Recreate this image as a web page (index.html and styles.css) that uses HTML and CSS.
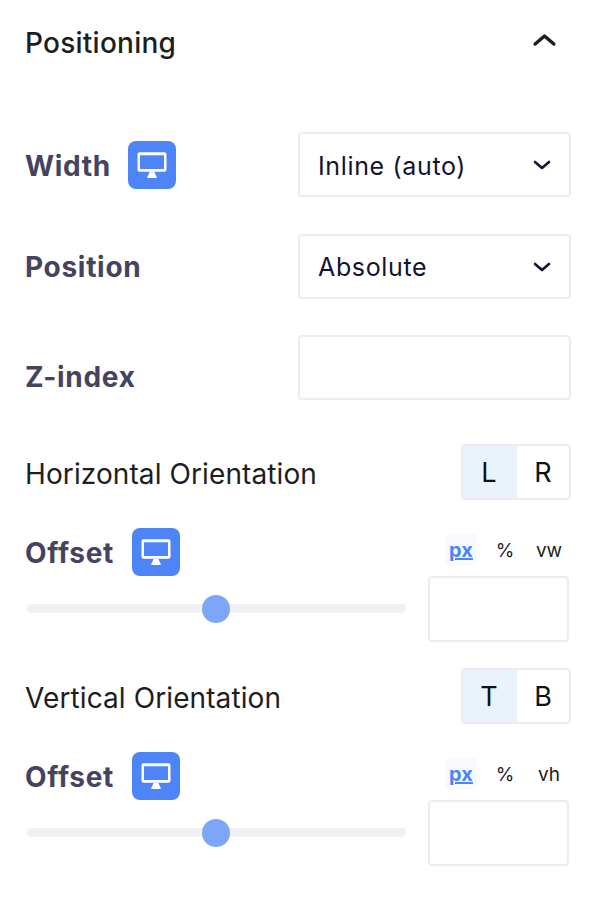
FILE: index.html
```html
<!DOCTYPE html>
<html lang="en">
<head>
<meta charset="utf-8">
<title>Positioning</title>
<link rel="stylesheet" href="styles.css">
</head>
<body>
<svg class="sprite" width="0" height="0" aria-hidden="true">
  <symbol id="monitor" viewBox="0 0 48 48">
    <path fill="#fff" fill-rule="evenodd" d="M11.500 11.300h25a2 2 0 0 1 2 2v15.500a2 2 0 0 1-2 2h-25a2 2 0 0 1-2-2V13.300a2 2 0 0 1 2-2zm.5 3v13.700h24V14.300z"/>
    <path fill="#fff" d="M21.500 31h5l2.500 6H19z"/>
  </symbol>
  <symbol id="chev" viewBox="0 0 20 12">
    <path fill="none" stroke="currentColor" stroke-width="2.600" stroke-linecap="round" stroke-linejoin="round" d="M3 3l7 6 7-6"/>
  </symbol>
</svg>
<main class="panel">
  <header class="head">
    <h1 class="title">Positioning</h1>
    <svg class="collapse"><use href="#chev"/></svg>
  </header>

  <div class="row row-width">
    <div class="label-group">
      <span class="label">Width</span>
      <span class="device"><svg><use href="#monitor"/></svg></span>
    </div>
    <div class="field select"><span class="value">Inline (auto)</span><svg class="caret"><use href="#chev"/></svg></div>
  </div>
  <div class="row row-position">
    <span class="label">Position</span>
    <div class="field select"><span>Absolute</span><svg class="caret"><use href="#chev"/></svg></div>
  </div>
  <div class="row row-z">
    <span class="label label-low">Z-index</span>
    <div class="field"></div>
  </div>

  <section class="orient">
    <div class="orient-head">
      <span class="orient-title">Horizontal Orientation</span>
      <div class="toggle"><span class="toggle-item on">L</span><span class="toggle-item">R</span></div>
    </div>
    <div class="offset">
      <div class="offset-left">
        <div class="label-group tight">
          <span class="label">Offset</span>
          <span class="device"><svg><use href="#monitor"/></svg></span>
        </div>
        <div class="slider"><span class="thumb"></span></div>
      </div>
      <div class="offset-right">
        <div class="units"><span class="unit active">px</span><span class="unit">%</span><span class="unit">vw</span></div>
        <div class="field small"></div>
      </div>
    </div>
  </section>

  <section class="orient">
    <div class="orient-head">
      <span class="orient-title">Vertical Orientation</span>
      <div class="toggle"><span class="toggle-item on">T</span><span class="toggle-item">B</span></div>
    </div>
    <div class="offset">
      <div class="offset-left">
        <div class="label-group tight">
          <span class="label">Offset</span>
          <span class="device"><svg><use href="#monitor"/></svg></span>
        </div>
        <div class="slider"><span class="thumb"></span></div>
      </div>
      <div class="offset-right">
        <div class="units"><span class="unit active">px</span><span class="unit">%</span><span class="unit">vh</span></div>
        <div class="field small"></div>
      </div>
    </div>
  </section>
</main>
</body>
</html>
```

FILE: styles.css
```css
* { box-sizing: border-box; }
html, body { margin: 0; padding: 0; background: #fff; }
body { font-family: Inter, "Liberation Sans", sans-serif; color: #1e1e1e; }
.sprite { position: absolute; }
.panel { width: 604px; height: 912px; padding: 0 33px 0 25px; overflow: hidden; }

.head { display: flex; align-items: center; justify-content: space-between; height: 86px; }
.title { margin: 0; font-size: 28px; font-weight: 500; line-height: 34px; color: #1e1e1e; letter-spacing: 0.25px; }
.collapse { width: 27px; height: 16px; margin: 0 13px 7px 0; color: #1e1e1e; transform: rotate(180deg); }

.row { display: flex; align-items: center; justify-content: space-between; }
.row-width { margin-top: 46px; }
.row-position { margin-top: 37px; }
.row-position .label { padding-top: 0; }
.row-position .select { padding-top: 0; }
.row-z { margin-top: 36px; margin-bottom: 44px; }

.label-group { display: flex; align-items: center; gap: 17px; }
.label-group.tight { gap: 18px; }
.label { font-size: 28px; font-weight: 700; line-height: 34px; padding-top: 2px; color: #45435f; letter-spacing: 0.7px; }
.label-low { position: relative; top: 8px; }
.device { display: flex; width: 48px; height: 48px; border-radius: 8px; background: #4d85f9; }
.device svg { width: 48px; height: 48px; }

.field { width: 273px; height: 65px; border: 2px solid #ebedf1; border-radius: 4px; background: #fff; }
.select { display: flex; align-items: center; justify-content: space-between; padding: 1px 17px 0 18px; font-size: 25px; color: #14132f; letter-spacing: 0.65px; }
.value { padding-top: 2px; }
.caret { width: 20px; height: 12px; color: #14132f; }

.orient { margin-bottom: 26px; }
.orient-head { display: flex; align-items: center; justify-content: space-between; height: 56px; }
.orient-title { font-size: 28px; font-weight: 400; padding-top: 4px; color: #1e1e1e; letter-spacing: 0.1px; }
.toggle { display: flex; width: 110px; height: 56px; border: 2px solid #ebedf1; border-radius: 4px; overflow: hidden; }
.toggle-item { flex: 1; display: flex; align-items: center; justify-content: center; font-size: 27px; color: #111; }
.toggle-item.on { flex: 0 0 54px; padding-right: 2px; background: #eaf2fb; }

.offset { display: flex; justify-content: space-between; margin-top: 28px; }
.offset-left { width: 382px; }
.offset-right { width: 141px; margin-right: 2px; }
.slider { position: relative; height: 9px; margin: 28px 1px 0 2px; border-radius: 5px; background: #f0f1f4; }
.thumb { position: absolute; left: 175px; top: -9px; width: 28px; height: 28px; border-radius: 50%; background: #7da5f8; }

.units { display: grid; grid-template-columns: repeat(3, 44px); justify-items: center; align-items: center; height: 34px; margin: 5px -2px 9px 11px; }
.unit { font-size: 19px; color: #1e1e1e; }
.unit.active { font-size: 20px; font-weight: 700; color: #4d85f9; text-decoration: underline; background: #f8fafe; padding: 4px 4px; border-radius: 3px; }
.field.small { width: 141px; height: 66px; }
```
